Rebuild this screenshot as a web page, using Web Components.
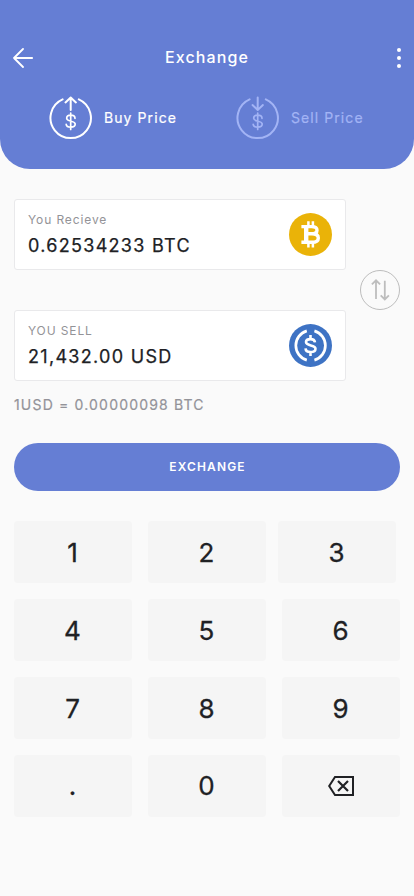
<!DOCTYPE html>
<html lang="en">
<head>
<meta charset="utf-8">
<title>Exchange</title>
<style>
html,body{margin:0;background:#fafafa}
body{font-family:Inter,"Liberation Sans",sans-serif;color:#202124}
</style>
</head>
<body>
<exchange-screen></exchange-screen>
<script>
const define = (name, render) => customElements.define(name, class extends HTMLElement {
  connectedCallback() {
    if (this.shadowRoot) return;
    const t = document.createElement('template');
    t.innerHTML = render(this);
    this.attachShadow({mode: 'open'}).append(t.content.cloneNode(true));
  }
});

const icons = {
  back: [20, 20, '<path d="M19.2 10H1M10 1 1 10l9 9" fill="none" stroke="currentColor" stroke-width="1.8" stroke-linecap="round" stroke-linejoin="round"/>'],
  more: [4, 20, '<g fill="currentColor"><circle cx="2" cy="2" r="2"/><circle cx="2" cy="10" r="2"/><circle cx="2" cy="18" r="2"/></g>'],
  buy: [44, 44, '<g fill="none" stroke="currentColor" stroke-width="2" stroke-linecap="round" stroke-linejoin="round"><path d="M13.6 3.4A20.2 20.2 0 1 0 29.8 3.4M21.7 14V1.6M16.5 6.4l5.2-4.9 5.2 4.9"/><path stroke-width="1.7" d="M21.7 17v16.4M26 22.3c0-2.1-1.7-3.1-4.3-3.1s-4 1.2-4 3.1c0 3.9 8.5 2 8.5 5.7 0 2.1-1.8 3.1-4.5 3.1s-4.3-1-4.5-2.8"/></g>'],
  sell: [44, 44, '<g fill="none" stroke="currentColor" stroke-width="2" stroke-linecap="round" stroke-linejoin="round"><path d="M13.6 3.4A20.2 20.2 0 1 0 29.8 3.4M21.7 1.5v12.3M16.5 9.1l5.2 4.8 5.2-4.8"/><path stroke-width="1.7" d="M21.7 17v16.4M26 22.3c0-2.1-1.7-3.1-4.3-3.1s-4 1.2-4 3.1c0 3.9 8.5 2 8.5 5.7 0 2.1-1.8 3.1-4.5 3.1s-4.3-1-4.5-2.8"/></g>'],
  btc: [43, 43, '<circle cx="21.5" cy="21.5" r="21.5" fill="#eab308"/><g fill="none" stroke="#fff"><path stroke-width="2.5" d="M19.4 8.2v5M23.9 8.2v5M19.4 29.3v5.2M23.9 29.3v5.2"/><path stroke-width="3.4" d="M12.4 13.6h10.4c3.2 0 5.2 1.3 5.2 3.6s-2 3.5-5.2 3.5h-5.4M23 20.7c4 0 6.3 1.6 6.3 4.2s-2.3 4.3-6.3 4.3H12.4"/><path stroke-width="4.4" d="M17.2 13v17"/></g>'],
  usd: [43, 43, '<circle cx="21.5" cy="21.5" r="21.5" fill="#3e73c4"/><g fill="none" stroke="#fff" stroke-width="2.7"><path d="M17.8 6.9A15.2 15.2 0 0 0 17.8 36.1M25.4 6.9A15.2 15.2 0 0 1 25.4 36.1"/><path stroke-width="2.6" d="M21.5 11v4M21.5 28v4M26 18.4c-.3-2.2-1.9-3.3-4.5-3.3-2.7 0-4.5 1.2-4.5 3 0 4.4 9.5 2.2 9.5 6.6 0 2.2-2 3.3-5 3.3-3.1 0-4.8-1.3-5-3.7"/></g>'],
  swap: [20, 22, '<path d="M6 20V1.4M1.9 5.4 6 1.3l4.1 4.1M14.8 1.7v18.8M10.7 16.4l4.1 4.1 4.1-4.1" fill="none" stroke="currentColor" stroke-width="1.8"/>'],
  erase: [26, 20, '<path d="M7 1h18v18H7L1.2 10z" fill="none" stroke="currentColor" stroke-width="2"/><path d="m10 5 10 10M20 5 10 15" fill="none" stroke="currentColor" stroke-width="2.2"/>']
};

define('app-icon', el => {
  const [w, h, body] = icons[el.getAttribute('name')];
  return `<style>:host{display:block;flex:none;width:${w}px;height:${h}px}svg{display:block}</style>
  <svg width="${w}" height="${h}" viewBox="0 0 ${w} ${h}">${body}</svg>`;
});

define('price-tab', el => `<style>
  :host{display:flex;align-items:center;gap:11px;height:44px;font-size:14px;line-height:20px;letter-spacing:1.08px;color:#fff}
  span{-webkit-text-stroke:.2px currentColor}
  :host([muted]){color:#a3b4f5}
  </style><app-icon name="${el.getAttribute('icon')}"></app-icon><span><slot></slot></span>`);

define('top-bar', () => `<style>
  :host{display:block;box-sizing:border-box;height:169px;padding-top:46px;background:#657ed4;border-radius:0 0 30px 30px;color:#fff}
  nav{display:grid;grid-template-columns:60px 1fr 60px;align-items:center;height:24px;padding:0 13px}
  h1{margin:0;font-size:16px;line-height:22px;height:24px;font-weight:500;letter-spacing:1.1px;text-align:center}
  .end{display:flex;justify-content:flex-end}
  .tabs{display:grid;grid-template-columns:187px 1fr;padding:26px 0 0 49px}
  </style>
  <nav><app-icon name="back"></app-icon><h1>Exchange</h1><div class="end"><app-icon name="more"></app-icon></div></nav>
  <div class="tabs"><price-tab icon="buy">Buy Price</price-tab><price-tab icon="sell" muted>Sell Price</price-tab></div>`);

define('amount-card', el => `<style>
  :host{display:flex;box-sizing:border-box;width:332px;height:71px;padding:0 13px;align-items:center;justify-content:space-between;background:#fff;border:1px solid #e9e9eb;border-radius:3px}
  .label{font-size:12px;line-height:16px;letter-spacing:.88px;color:#939397}
  .value{font-size:18px;line-height:24px;padding-top:6px;margin-bottom:-1px;letter-spacing:1.3px;-webkit-text-stroke:.25px currentColor;color:#202124}
  </style>
  <div><div class="label"><slot name="label"></slot></div><div class="value"><slot></slot></div></div>
  <app-icon name="${el.getAttribute('coin')}"></app-icon>`);

define('swap-button', () => `<style>
  :host{display:flex;box-sizing:border-box;width:40px;height:40px;align-items:center;justify-content:center;border:1px solid #bdbdbd;border-radius:50%;color:#bdbdbd}
  </style><app-icon name="swap"></app-icon>`);

define('primary-button', () => `<style>
  :host{display:block}
  button{display:block;width:100%;height:48px;padding:0 0 0 1px;border:0;border-radius:24px;background:#657ed4;color:#fff;font:600 12px/48px Inter,"Liberation Sans",sans-serif;letter-spacing:1.15px}
  </style><button><slot></slot></button>`);

define('key-button', () => `<style>
  :host{display:flex;height:62px;align-items:center;justify-content:center;background:#f5f5f5;border-radius:4px;font-size:26px;line-height:32px;color:#202124;-webkit-text-stroke:.3px currentColor}
  span{padding:1px 1px 0 0}
  :host([raised]) span{padding:0 1px 1px 0}
  :host([symbol]) span{padding:0}
  </style><span><slot></slot></span>`);

define('key-pad', () => `<style>
  :host{display:grid;grid-template-columns:repeat(3,118px);gap:16px}
  key-button:nth-of-type(3){margin:0 4px 0 -4px}
  </style>${[...'123456789.0'].map(k => `<key-button${k === '.' || k === '0' ? ' raised' : ''}>${k}</key-button>`).join('')}<key-button symbol><app-icon name="erase"></app-icon></key-button>`);

define('exchange-screen', () => `<style>
  :host{display:block;width:414px;height:896px;overflow:hidden;background:#fafafa}
  main{padding:30px 14px 0}
  .pair{display:grid;grid-template-columns:332px 40px;column-gap:14px;align-items:center}
  .cards{display:grid;gap:40px}
  .rate{margin:14px 0 28px;font-size:14px;line-height:20px;letter-spacing:1.18px;-webkit-text-stroke:.2px currentColor;color:#939399}
  key-pad{margin-top:30px}
  </style>
  <top-bar></top-bar>
  <main>
    <div class="pair"><div class="cards">
      <amount-card coin="btc"><span slot="label">You Recieve</span>0.62534233 BTC</amount-card>
      <amount-card coin="usd"><span slot="label">YOU SELL</span>21,432.00 USD</amount-card>
    </div><swap-button></swap-button></div>
    <p class="rate">1USD = 0.00000098 BTC</p>
    <primary-button>EXCHANGE</primary-button>
    <key-pad></key-pad>
  </main>`);
</script>
</body>
</html>
